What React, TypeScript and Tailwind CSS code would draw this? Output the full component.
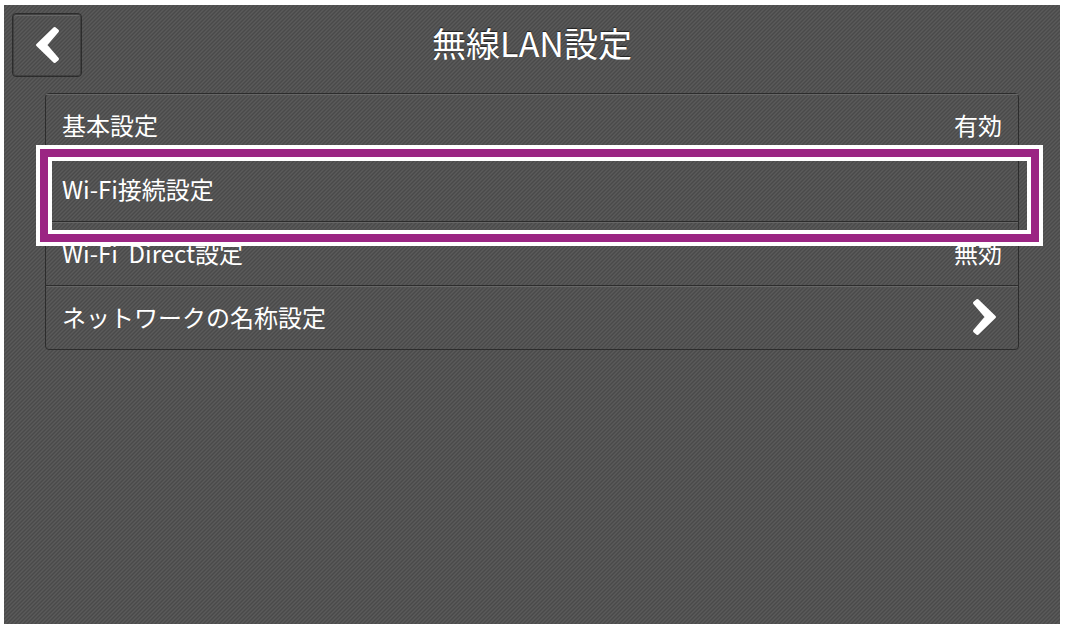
type Row = { label: string; value?: string; arrow?: boolean; selected?: boolean }

const ROWS: Row[] = [
  { label: '基本設定', value: '有効' },
  { label: 'Wi-Fi接続設定', selected: true },
  { label: 'Wi-Fi  Direct設定', value: '無効' },
  { label: 'ネットワークの名称設定', arrow: true },
]

function Chevron({ className = '' }: { className?: string }) {
  return (
    <svg viewBox="0 0 26 40" className={`w-[26px] h-10 ${className}`} fill="white" stroke="white" strokeWidth="3" strokeLinejoin="round" aria-hidden="true">
      <path d="M2.5 6 L5.5 3.5 L22.5 20 L5.5 36.5 L2.5 34 L14.5 20 Z" />
    </svg>
  )
}

export default function App() {
  return (
    <div className="min-h-screen flex bg-white pt-[5px] pb-1 pl-1 pr-[5px] font-['Noto_Sans_CJK_JP',sans-serif] text-white">
      <main className="flex-1 bg-[#525252] bg-[linear-gradient(135deg,#5a5a5a_12%,#4a4a4a_13%,#4a4a4a_37%,#5a5a5a_38%,#5a5a5a_62%,#4a4a4a_63%,#4a4a4a_87%,#5a5a5a_88%)] bg-size-[4px_4px] [text-shadow:0_-1px_1px_#222]">
        {/* Header */}
        <header className="grid grid-cols-[70px_1fr_70px] items-start p-2">
          <button type="button" aria-label="戻る" className="h-16 flex items-center justify-center rounded-sm border border-[#2c2c2c] shadow-[inset_0_0_0_1px_#404040,inset_1px_2px_0_#666]">
            <Chevron className="rotate-180" />
          </button>
          <h1 className="text-center text-[34px] leading-[60px]">無線LAN設定</h1>
        </header>

        {/* Settings list */}
        <ul className="mt-2 mx-[41px] rounded-sm border border-[#2c2c2c]">
          {ROWS.map(row => (
            <li key={row.label} className="relative border-b border-[#2c2c2c] last:border-b-0">
              <button type="button" className="w-full h-[63px] px-4 pb-0.5 flex items-center justify-between text-2xl text-left shadow-[inset_0_1px_0_#666]">
                <span className="whitespace-pre">{row.label}</span>
                {row.value && <span>{row.value}</span>}
                {row.arrow && <Chevron className="mr-1" />}
              </button>
              {row.selected && (
                <div className="absolute z-10 -top-[13px] -bottom-[25px] -left-[10px] -right-[25px] border-4 border-white pointer-events-none">
                  <div className="h-full border-8 border-[#9b2583]">
                    <div className="h-full border-4 border-white" />
                  </div>
                </div>
              )}
            </li>
          ))}
        </ul>
      </main>
    </div>
  )
}
